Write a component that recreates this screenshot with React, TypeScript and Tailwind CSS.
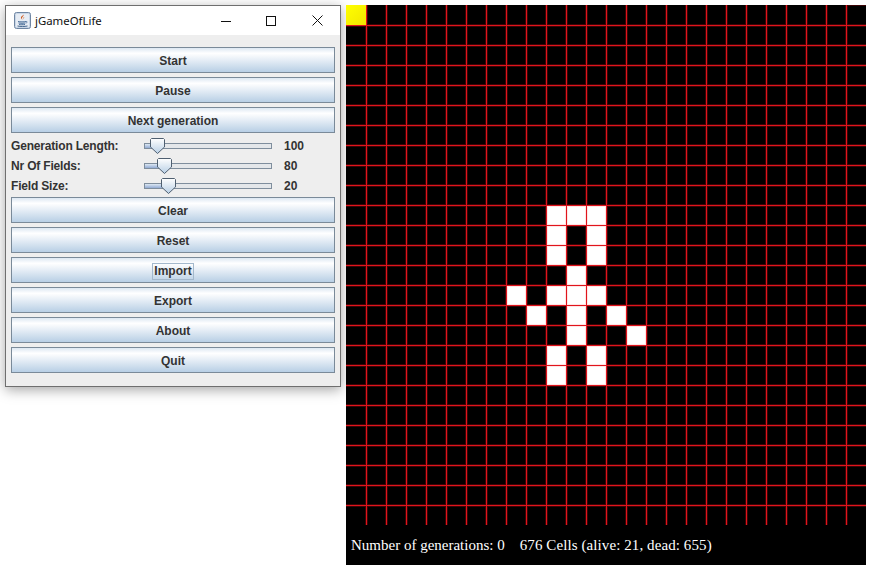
import React from "react"

const COLS = 26
const ROWS = 26

const alive: Record<number, number[]> = {
  10: [10, 11, 12],
  11: [10, 12],
  12: [10, 12],
  13: [11],
  14: [8, 10, 11, 12],
  15: [9, 11, 13],
  16: [11, 14],
  17: [10, 12],
  18: [10, 12],
}

const JavaIcon = () => (
  <svg width="17" height="17" viewBox="0 0 17 17" className="shrink-0">
    <rect x="0.5" y="0.5" width="16" height="16" rx="2" fill="#c9d6e6" stroke="#6f86a3" />
    <rect x="2" y="2" width="13" height="13" rx="1" fill="#e6ecf4" />
    <path d="M9.5 2.5c1 1.6-2.4 2.6-1.400 4.400.3.5.6.8.8 1.100-1.600-1-2.600-2.100-1.500-3.400.8-.9 2-1.200 2.100-2.100z" fill="#cf5418" />
    <path d="M10.800 5c-1 .7-1.900 1.200-1.100 2.200-.6-.4-1.100-1-.7-1.500.4-.4 1.100-.5 1.800-.7z" fill="#dd7a3a" />
    <path d="M4 9.500c2 .5 6 .5 8 0M4.500 11c2 .4 5 .4 7 0M5 12.500c1.500.3 4 .3 6 0" fill="none" stroke="#4a6f9a" strokeWidth="1" />
    <path d="M12 9.500c1.400-.3 1.800 1 .2 1.500" fill="none" stroke="#4a6f9a" strokeWidth="0.800" />
    <path d="M3.500 14c3 .6 7 .6 10 0" fill="none" stroke="#3c5f88" strokeWidth="1" />
  </svg>
)

const WindowControls = () => (
  <div className="flex items-center">
    <svg width="10" height="10" viewBox="0 0 10 10" className="mr-[35px]">
      <path d="M0 5.500H10" stroke="#111" strokeWidth="1" />
    </svg>
    <svg width="10" height="10" viewBox="0 0 10 10" className="mr-[36px]">
      <rect x="0.500" y="0.500" width="9" height="9" fill="none" stroke="#111" strokeWidth="1" />
    </svg>
    <svg width="11" height="11" viewBox="0 0 11 11">
      <path d="M0.500 0.500L10.500 10.500M10.500 0.500L0.500 10.500" stroke="#111" strokeWidth="1" />
    </svg>
  </div>
)

const MetalButton = ({ text, focused }: { text: string; focused?: boolean }) => (
  <button className="flex h-[26px] w-full items-center justify-center border border-[#7a8a99] bg-[linear-gradient(180deg,#dde8f3_0%,#ffffff_22%,#e6eef6_50%,#b8cfe5_100%)] pt-[2px] text-[12px] font-bold text-[#333333]">
    <span className={focused ? "border border-[#a3b8cc] px-[1px] leading-[15px]" : "leading-[15px]"}>
      {text}
    </span>
  </button>
)

const SliderRow = ({ label, value, thumb }: { label: string; value: string; thumb: number }) => (
  <div className="flex h-[20px] items-center text-[12px] font-bold text-[#333333]">
    <div className="w-[133px] shrink-0 tracking-[-0.18px]">{label}</div>
    <div className="relative h-[6px] w-[128px] shrink-0 border border-[#7f8e9d] bg-[#e4e7ea]">
      <div
        className="h-full bg-[linear-gradient(180deg,#dde8f3,#93abd3)]"
        style={{ width: thumb + 6 }}
      />
      <svg
        width="15"
        height="16"
        viewBox="0 0 15 16"
        className="absolute top-[-6px]"
        style={{ left: thumb - 1 }}
      >
        <defs>
          <linearGradient id={"thumb" + thumb} x1="0" y1="0" x2="0" y2="1">
            <stop offset="0" stopColor="#ffffff" />
            <stop offset="1" stopColor="#b8cfe5" />
          </linearGradient>
        </defs>
        <path
          d="M1.500.5H13.500L14.500 1.500V9L7.500 15.500L.5 9V1.500Z"
          fill={"url(#thumb" + thumb + ")"}
          stroke="#4f5f70"
          strokeWidth="1"
        />
      </svg>
    </div>
    <div className="ml-[12px]">{value}</div>
  </div>
)

// dark red fringe next to the lines, the grid in the screenshot is a bit blurred
const cellFringe = (r: number, c: number, isAlive?: boolean) => {
  if (isAlive) return "shadow-[inset_0_0_0_1px_#ffe4e4]"
  if (r === ROWS - 1 && c === 0) return "shadow-[inset_0_1px_0_#3a0406,inset_-1px_0_0_#3a0406]"
  if (r === ROWS - 1 && c === COLS - 1) return "shadow-[inset_1px_1px_0_#3a0406]"
  if (r === ROWS - 1) return "shadow-[inset_1px_1px_0_#3a0406,inset_-1px_0_0_#3a0406]"
  if (c === COLS - 1) return "shadow-[inset_1px_1px_0_#3a0406,inset_0_-1px_0_#3a0406]"
  if (c === 0) return "shadow-[inset_0_1px_0_#3a0406,inset_-1px_-1px_0_#3a0406]"
  if (r === 0) return "shadow-[inset_1px_0_0_#3a0406,inset_-1px_-1px_0_#3a0406]"
  return "shadow-[inset_0_0_0_1px_#3a0406]"
}

const Board = () => {
  const cells = []
  for (let r = 0; r < ROWS; r++) {
    for (let c = 0; c < COLS; c++) {
      const isAlive = alive[r]?.includes(c)
      const isCursor = r === 0 && c === 0
      cells.push(
        <div
          key={r + "-" + c}
          className={
            (c > 0 ? "border-l border-l-[#e0141c] " : "") +
            (r > 0 ? "border-t border-t-[#e0141c] " : "") +
            (isCursor
              ? "bg-[linear-gradient(135deg,#ffff00,#f2e600)]"
              : (isAlive ? "bg-white " : "bg-black ") + cellFringe(r, c, isAlive))
          }
        />,
      )
    }
  }
  return <div className="grid grid-cols-[repeat(26,20px)] grid-rows-[repeat(26,20px)]">{cells}</div>
}

export default function App() {
  return (
    <div className="flex h-[568px] w-[869px] items-start overflow-hidden bg-white pl-[5px] pt-[5px] font-['Liberation_Sans',Arial,sans-serif]">
      <div className="w-[336px] shrink-0 border border-[#6f6f6f] bg-[#eeeeee] shadow-[0_3px_12px_rgba(0,0,0,0.35)]">
        <div className="flex h-[29px] items-center bg-white pl-[8px] pr-[17px]">
          <JavaIcon />
          <div className="ml-[4px] flex-1 font-['Noto_Sans',sans-serif] text-[11.4px] text-[#111111]">jGameOfLife</div>
          <WindowControls />
        </div>
        <div className="flex flex-col px-[5px] pb-[13px] pt-[12px]">
          <div className="flex flex-col gap-[4px]">
            <MetalButton text="Start" />
            <MetalButton text="Pause" />
            <MetalButton text="Next generation" />
          </div>
          <div className="mb-[1px] mt-[3px] flex flex-col">
            <SliderRow label="Generation Length:" value="100" thumb={6} />
            <SliderRow label="Nr Of Fields:" value="80" thumb={13} />
            <SliderRow label="Field Size:" value="20" thumb={17} />
          </div>
          <div className="flex flex-col gap-[4px]">
            <MetalButton text="Clear" />
            <MetalButton text="Reset" />
            <MetalButton text="Import" focused />
            <MetalButton text="Export" />
            <MetalButton text="About" />
            <MetalButton text="Quit" />
          </div>
        </div>
      </div>
      <div className="ml-[5px] flex h-[560px] w-[520px] shrink-0 flex-col bg-black">
        <Board />
        <div className="whitespace-pre pl-[5px] pt-[12px] font-['Liberation_Serif',serif] text-[15px] leading-[16px] text-white">
          {"Number of generations: 0    "}
          <span className="tracking-[0.09px]">{"676 Cells (alive: 21, dead: 655)"}</span>
        </div>
      </div>
    </div>
  )
}
